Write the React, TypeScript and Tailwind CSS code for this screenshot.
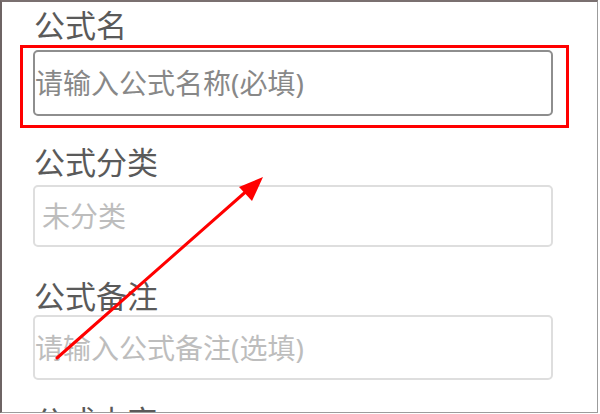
const FONT = "font-['Noto_Sans','Noto_Sans_CJK_SC',sans-serif]"

function Field({
  label,
  placeholder,
  focused,
  inset,
  height,
  labelGap,
  top,
}: {
  label: string
  placeholder: string
  focused?: boolean
  inset: string
  height: string
  labelGap: string
  top: string
}) {
  return (
    <div className={top}>
      <div className="pl-[1px] text-[31px] leading-[31px] text-[#5a5a5a]">{label}</div>
      <input
        readOnly
        placeholder={placeholder}
        className={[
          labelGap,
          height,
          inset,
          'block w-[520px] rounded-[5px] border-2 bg-white text-[28px] outline-none',
          focused
            ? 'border-[#8e8e8e] placeholder:text-[#888888]'
            : 'border-[#dedede] placeholder:text-[#bdbdbd]',
        ].join(' ')}
      />
    </div>
  )
}

export default function App() {
  return (
    <div className={`relative h-[414px] w-[600px] overflow-hidden bg-white ${FONT}`}>
      <div className="h-[413px] w-[598px] overflow-hidden border-t-2 border-l-2 border-r border-b border-t-[#7a7070] border-l-[#6e6464] border-r-[#9c9c9c] border-b-[#9c9c9c] pl-[31px]">
        <Field
          top="mt-[8px]"
          label="公式名"
          placeholder="请输入公式名称(必填)"
          focused
          inset="pl-0"
          height="h-[66px]"
          labelGap="mt-[9px]"
        />
        <Field
          top="mt-[31px]"
          label="公式分类"
          placeholder="未分类"
          inset="pl-[7px]"
          height="h-[62px]"
          labelGap="mt-[7px]"
        />
        <Field
          top="mt-[34px]"
          label="公式备注"
          placeholder="请输入公式备注(选填)"
          inset="pl-0"
          height="h-[65px]"
          labelGap="mt-[3px]"
        />
        <div className="mt-[26px] pl-[1px] text-[31px] leading-[31px] text-[#5a5a5a]">公式内容</div>
      </div>

      {/* highlight frame around the name input */}
      <div className="pointer-events-none absolute left-[20px] top-[45px] h-[83px] w-[549px] border-[3px] border-[#ff0000]" />

      {/* pointer arrow */}
      <svg className="pointer-events-none absolute left-0 top-0" width="600" height="414">
        <line x1="57" y1="358" x2="250" y2="188" stroke="#ff0000" strokeWidth="3" strokeLinecap="round" />
        <polygon points="263,177 239,187 252,201" fill="#ff0000" />
      </svg>
    </div>
  )
}
